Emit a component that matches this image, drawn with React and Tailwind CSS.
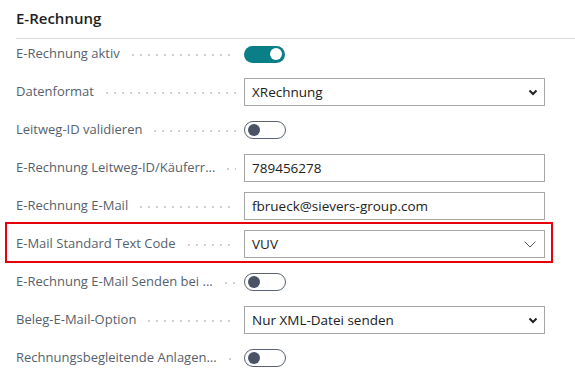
import React from 'react';

const Dots = () => (
  <div className="flex-1 min-w-[2px] h-[2px] mt-[2px] ml-3 bg-[linear-gradient(to_right,#cfcfcf_2px,transparent_2px)] bg-[length:8px_2px] bg-repeat-x" />
);

const Toggle = ({ on }) =>
  on ? (
    <div className="w-[41px] h-[17px] rounded-full bg-[#0b7f88] flex items-center justify-end pr-[3px]">
      <div className="w-[12px] h-[12px] rounded-full bg-white" />
    </div>
  ) : (
    <div className="w-[42px] h-[18px] rounded-full border border-[#5a6270] flex items-center pl-[3px]">
      <div className="w-[12px] h-[12px] rounded-full bg-[#4a5366]" />
    </div>
  );

const BoldChevron = () => (
  <svg width="10" height="7" viewBox="0 0 10 7" className="mr-[6px]">
    <path d="M1.5 1.5 L5 5 L8.5 1.5" fill="none" stroke="#222" strokeWidth="2" />
  </svg>
);

const ThinChevron = () => (
  <svg width="12" height="7" viewBox="0 0 12 7" className="mr-[8px]">
    <path d="M0.5 0.5 L6 6 L11.5 0.5" fill="none" stroke="#555" strokeWidth="1" />
  </svg>
);

const Box = ({ children, chevron }) => (
  <div className="w-[301px] h-[28px] border border-[#a6a6a6] bg-white flex items-center justify-between pl-[7px]">
    <span className="text-[13.5px] text-[#212121] whitespace-nowrap">{children}</span>
    {chevron === 'bold' && <BoldChevron />}
    {chevron === 'thin' && <ThinChevron />}
  </div>
);

const Row = ({ label, children, highlight }) => (
  <div className="relative h-[38px] flex items-center px-4">
    {highlight && (
      <div className="absolute left-[5px] w-[548px] top-[-3px] h-[41px] border-2 border-[#e8000b] pointer-events-none" />
    )}
    <div className="w-[220px] shrink-0 flex items-center">
      <span className="text-[13px] text-[#565f6d] whitespace-nowrap">{label}</span>
      <Dots />
    </div>
    <div className="ml-2 flex items-center">{children}</div>
  </div>
);

export default function App() {
  return (
    <div className="w-[575px] h-[381px] bg-white overflow-hidden" style={{ fontFamily: '"Segoe UI", "Open Sans", "Noto Sans", sans-serif' }}>
      <div className="h-[39px] ml-4 border-b border-[#dadada] flex items-center">
        <h2 className="text-[15px] font-semibold text-[#1f1f1f] -mt-[1px]">E-Rechnung</h2>
      </div>
      <div className="-mt-1">
        <Row label="E-Rechnung aktiv"><Toggle on /></Row>
        <Row label="Datenformat"><Box chevron="bold">XRechnung</Box></Row>
        <Row label="Leitweg-ID validieren"><Toggle /></Row>
        <Row label="E-Rechnung Leitweg-ID/Käuferr..."><Box>789456278</Box></Row>
        <Row label="E-Rechnung E-Mail"><Box>fbrueck@sievers-group.com</Box></Row>
        <Row label="E-Mail Standard Text Code" highlight><Box chevron="thin">VUV</Box></Row>
        <Row label="E-Rechnung E-Mail Senden bei ..."><Toggle /></Row>
        <Row label="Beleg-E-Mail-Option"><Box chevron="bold">Nur XML-Datei senden</Box></Row>
        <Row label="Rechnungsbegleitende Anlagen..."><Toggle /></Row>
      </div>
    </div>
  );
}
